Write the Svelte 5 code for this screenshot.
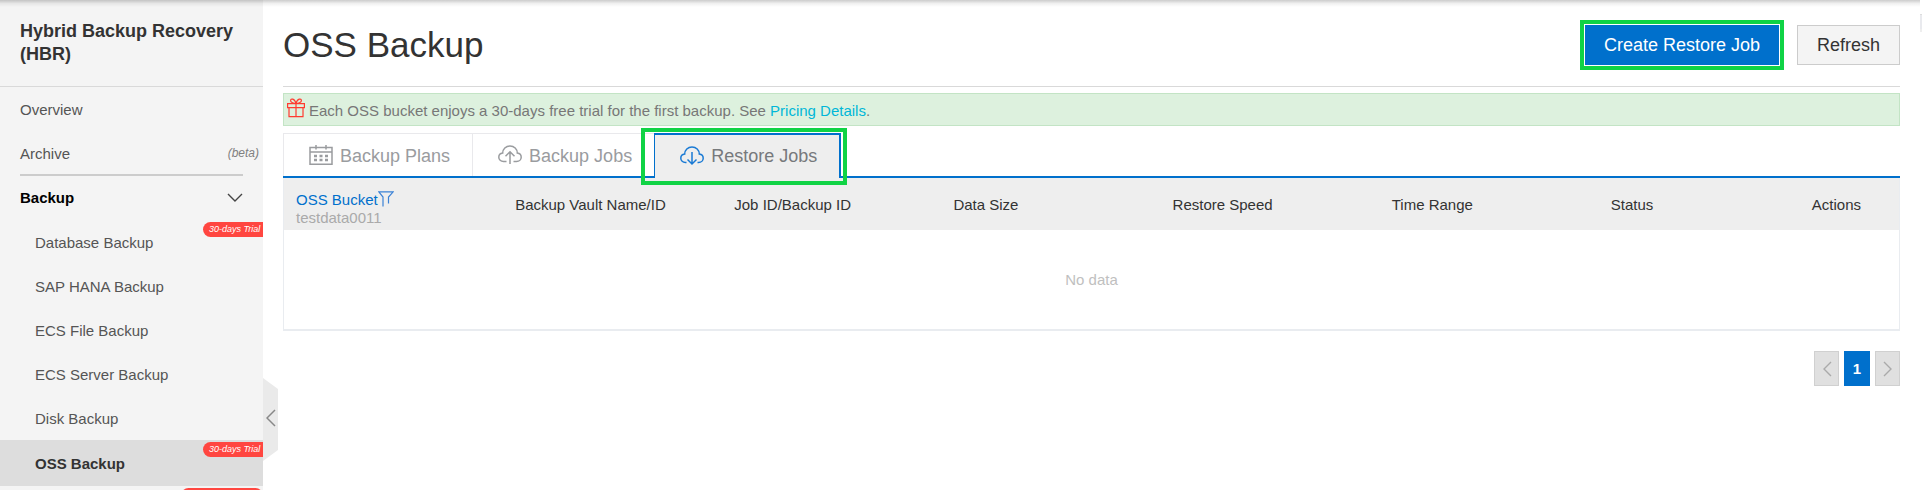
<script>
  const backupItems = [
    { name: 'Database Backup', trial: true },
    { name: 'SAP HANA Backup' },
    { name: 'ECS File Backup' },
    { name: 'ECS Server Backup' },
    { name: 'Disk Backup' },
    { name: 'OSS Backup', trial: true, active: true },
  ];
  const columns = ['Backup Vault Name/ID', 'Job ID/Backup ID', 'Data Size', 'Restore Speed', 'Time Range'];
</script>

<div class="page">
  <div class="topshade"></div>

  <aside class="sidebar">
    <h2>Hybrid Backup Recovery (HBR)</h2>
    <nav>
      <a class="item" href="#overview">Overview</a>
      <a class="item" href="#archive">Archive <em>(beta)</em></a>
      <hr />
      <button class="item group" type="button" aria-expanded="true">
        Backup
        <svg width="16" height="10" viewBox="0 0 16 10"><path d="M1 1l7 7 7-7" fill="none" stroke="#444" stroke-width="1.4" /></svg>
      </button>
      {#each backupItems as item}
        <a class="item sub" class:active={item.active} href="#backup">
          {item.name}
          {#if item.trial}<span class="trial">30-days Trial</span>{/if}
        </a>
      {/each}
      <div class="next"><span class="trial wide"></span></div>
    </nav>
    <button class="collapse" type="button" aria-label="Collapse sidebar">
      <svg width="10" height="18" viewBox="0 0 10 18"><path d="M9 1L1 9l8 8" fill="none" stroke="#888" stroke-width="1.5" /></svg>
    </button>
  </aside>

  <main>
    <header>
      <h1>OSS Backup</h1>
      <div class="actions">
        <span class="mark"><button class="primary" type="button">Create Restore Job</button></span>
        <button class="refresh" type="button">Refresh</button>
      </div>
    </header>

    <p class="notice">
      <svg width="18" height="20" viewBox="0 0 18 20" fill="none" stroke="#ff3b30" stroke-width="1.2">
        <path d="M.6 5.6h16.8v4H.6zM2 9.6h14v9H2zM9 5.6v13M9 5.4C7 5.4 3.6 4.6 3.6 2.7 3.6 .2 7.5 .2 9 5.4 10.500 .2 14.4 .2 14.4 2.7 14.4 4.6 11 5.4 9 5.4z" />
      </svg>
      <span>Each OSS bucket enjoys a 30-days free trial for the first backup. See <a href="#pricing">Pricing Details</a>.</span>
    </p>

    <div class="tabs" role="tablist">
      <button class="tab" role="tab" type="button" aria-selected="false">
        <svg width="24" height="20" viewBox="0 0 24 20" fill="none" stroke="currentColor" stroke-width="1.5">
          <path d="M1 2.500h22v16.700H1zM1 7h22M7 0v4.500M17 0v4.500" />
          <path d="M5 11h3M10.500 11h3M16 11h3M5 15h3M10.500 15h3M16 15h3" stroke-width="2.6" />
        </svg>
        <span>Backup Plans</span>
      </button>
      <button class="tab" role="tab" type="button" aria-selected="false">
        <svg width="24" height="20" viewBox="0 0 24 20" fill="none" stroke="currentColor" stroke-width="1.5">
          <path d="M8.500 16.500H5.500C2.800 16.500 .8 14.700 .8 12.200 .8 9.900 2.500 8.300 4.700 8 4.700 4 7.900 1 12 1s7.300 3 7.300 7c2.200.3 3.900 1.900 3.900 4.200 0 2.500-2 4.300-4.700 4.300h-3M12 19V7M7.500 11.300L12 6.800l4.500 4.500" />
        </svg>
        <span>Backup Jobs</span>
      </button>
      <button class="tab selected" role="tab" type="button" aria-selected="true">
        <svg width="24" height="20" viewBox="0 0 24 20" fill="none" stroke="#1a7ad4" stroke-width="1.5">
          <path d="M6.500 16.500h-1C2.800 16.500 .8 14.700 .8 12.200 .8 9.900 2.500 8.300 4.700 8 4.700 4 7.900 1 12 1s7.300 3 7.300 7c2.200.3 3.900 1.900 3.900 4.200 0 2.500-2 4.300-4.700 4.300h-1M12 6v12M7.500 13.500L12 18l4.500-4.500" />
        </svg>
        <span>Restore Jobs</span>
      </button>
    </div>

    <table>
      <thead>
        <tr>
          <th scope="col" class="first">
            <button class="filter" type="button">
              OSS Bucket<svg width="16" height="16" viewBox="0 0 16 16" fill="none" stroke="#3b82d6" stroke-width="1.2"><path d="M5 15.500V6L.8 .8h14.400L10.500 6v6.500" /></svg>
            </button>
            <span class="value">testdata0011</span>
          </th>
          {#each columns as column}
            <th scope="col">{column}</th>
          {/each}
          <th scope="col" class="status">Status</th>
          <th scope="col" class="last">Actions</th>
        </tr>
      </thead>
      <tbody>
        <tr><td colspan="8">No data</td></tr>
      </tbody>
    </table>

    <div class="pager">
      <button type="button" disabled aria-label="Previous page">
        <svg width="10" height="16" viewBox="0 0 10 16"><path d="M9 1L2 8l7 7" fill="none" stroke="#aaa" stroke-width="1.4" /></svg>
      </button>
      <button type="button" class="current">1</button>
      <button type="button" disabled aria-label="Next page">
        <svg width="10" height="16" viewBox="0 0 10 16"><path d="M1 1l7 7-7 7" fill="none" stroke="#aaa" stroke-width="1.4" /></svg>
      </button>
    </div>
  </main>
  <div class="edge"></div>
</div>

<style>
  :global(body) {
    font-family: 'Liberation Sans', Arial, sans-serif;
    font-size: 15px;
    color: #333;
    background: #fff;
    overflow: hidden;
  }
  button {
    font: inherit;
    color: inherit;
    margin: 0;
    padding: 0;
    border: 0;
    background: none;
    border-radius: 0;
  }
  a { text-decoration: none; color: inherit; }
  svg { display: block; flex: none; }

  .page { position: relative; display: flex; height: 100vh; }
  .topshade {
    position: absolute;
    z-index: 2;
    inset: 0 2px auto 0;
    height: 7px;
    background: linear-gradient(rgba(0, 0, 0, .2), rgba(0, 0, 0, .06) 50%, transparent);
  }
  .edge {
    position: absolute;
    right: 0;
    top: 14px;
    width: 2px;
    height: 14px;
    background: #e9eaee;
    border-top: 1px solid #ddd;
    border-bottom: 3px solid #eee;
  }

  .sidebar { position: relative; flex: none; width: 263px; background: #f4f4f4; }
  h2 {
    margin: 0;
    padding: 20px;
    font-size: 18px;
    line-height: 23px;
    border-bottom: 1px solid #d9d9d9;
  }
  nav { height: calc(100vh - 87px); overflow: hidden; }
  .item {
    position: relative;
    display: flex;
    align-items: center;
    justify-content: space-between;
    box-sizing: border-box;
    width: 100%;
    height: 44px;
    padding: 0 4px 0 20px;
    color: #555;
  }
  .item em { font-size: 12px; color: #808080; }
  hr { margin: -1px 20px; border: 0; height: 2px; background: #ccc; }
  .group { height: 45px; padding-right: 20px; font-weight: bold; color: #000; }
  .sub { padding-left: 35px; }
  .active { height: 46px; background: #ddd; color: #333; font-weight: bold; }
  .trial {
    position: absolute;
    right: 0;
    top: 2px;
    box-sizing: border-box;
    width: 60px;
    height: 15px;
    padding-left: 6px;
    border-radius: 8px 0 0 8px;
    background: #ff4640;
    color: #fff;
    font: italic 9px/15px 'Liberation Sans', Arial, sans-serif;
    white-space: nowrap;
  }
  .next { position: relative; height: 44px; }
  .wide { width: 82px; border-radius: 8px; }
  .collapse {
    position: absolute;
    left: 100%;
    top: 378px;
    display: flex;
    align-items: center;
    justify-content: center;
    box-sizing: border-box;
    width: 15px;
    height: 83px;
    padding-bottom: 4px;
    background: #eaeaea;
    clip-path: polygon(0 0, 100% 11px, 100% 72px, 0 100%);
  }

  main { flex: 1; min-width: 0; padding: 0 22px 0 20px; }
  header {
    display: flex;
    align-items: center;
    justify-content: space-between;
    height: 82px;
    padding-top: 4px;
    border-bottom: 1px solid #d9d9d9;
  }
  h1 { margin: 0; font-size: 35px; line-height: 40px; font-weight: normal; color: #333; }
  .actions { display: flex; align-items: center; gap: 13px; font-size: 18px; }
  .mark { border: 4px solid #10d345; padding: 1px; }
  .actions button { display: block; height: 40px; }
  .primary { padding: 0 19px; background: #0070cc; color: #fff; }
  .refresh { padding: 0 19px; background: #f4f4f4; border: 1px solid #ccc; }

  .notice {
    display: flex;
    align-items: flex-start;
    gap: 4px;
    margin: 6px 0 7px;
    padding: 4px 3px 0;
    height: 27px;
    background: #ddf1de;
    border: 1px solid #c3e4c5;
    color: #777;
    line-height: 26px;
  }
  .notice a { color: #00b7d8; }

  .tabs { display: flex; height: 43px; border-bottom: 2px solid #0070cc; }
  .tab {
    display: flex;
    align-items: center;
    gap: 7px;
    height: 43px;
    padding: 0 22px 0 25px;
    border: solid #e9e9ec;
    border-width: 1px 0 0 1px;
    font-size: 18px;
    color: #9a9c9f;
  }
  .tab span { padding-top: 2px; }
  .selected {
    position: relative;
    height: 45px;
    padding-bottom: 2px;
    border: solid #0070cc;
    border-width: 2px 2px 0 1px;
    background: #eee;
    color: #77797c;
  }
  .selected::after {
    content: '';
    position: absolute;
    inset: -7px -8px -7px -14px;
    border: 4px solid #10d345;
  }

  table {
    width: 100%;
    table-layout: fixed;
    border-collapse: separate;
    border-spacing: 0;
    border: 1px solid #e9ecf0;
    border-width: 0 1px 2px;
  }
  th {
    box-sizing: border-box;
    width: 13.57%;
    height: 52px;
    padding: 0 12px;
    background: #eee;
    font-weight: normal;
    text-align: left;
    vertical-align: middle;
    white-space: nowrap;
  }
  th.first { padding-bottom: 3px; vertical-align: bottom; }
  th.status { width: auto; }
  th.last { width: 113px; padding-right: 38px; text-align: right; }
  .filter { display: flex; color: #0070cc; line-height: 18px; }
  .value { display: block; line-height: 18px; color: #aaa; }
  td { height: 99px; padding: 0; text-align: center; color: #c0c0c0; }

  .pager { display: flex; justify-content: flex-end; gap: 5px; margin-top: 20px; }
  .pager button {
    display: flex;
    align-items: center;
    justify-content: center;
    box-sizing: border-box;
    width: 25px;
    height: 35px;
    border: 1px solid #d0d0d0;
    background: #e0e0e0;
  }
  .pager .current { width: 26px; border: 0; background: #0070cc; color: #fff; font-weight: bold; }
</style>
